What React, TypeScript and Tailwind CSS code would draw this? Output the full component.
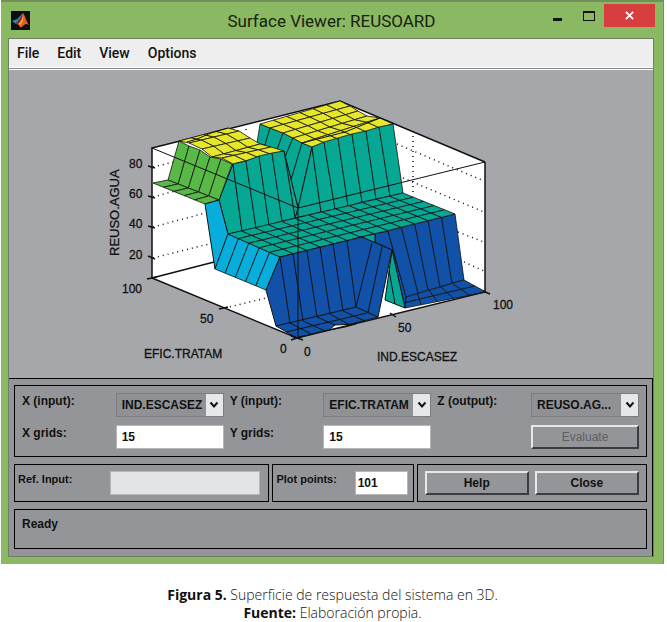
import type { ReactNode } from 'react';

type Point = [number, number];

const YELLOW = '#e6e62a';
const TEAL = '#06a893';
const GREEN = '#58b947';
const CYAN = '#08aedb';
const BLUE = '#1152a8';

const toPoints = (points: Point[]) => points.map((p) => p.join(',')).join(' ');

const mix = (a: Point, b: Point, t: number): Point => [
  a[0] + (b[0] - a[0]) * t,
  a[1] + (b[1] - a[1]) * t,
];

const split = (a: Point, b: Point, n: number): Point[] =>
  Array.from({ length: n + 1 }, (_, i) => mix(a, b, i / n));

// A strip of mesh cells stretched between two edges with the same number of points
function Patch({ from, to, steps = 1, fill }: { from: Point[]; to: Point[]; steps?: number; fill: string }) {
  const cells: Point[][] = [];
  for (let i = 0; i < from.length - 1; i++) {
    for (let j = 0; j < steps; j++) {
      cells.push([
        mix(from[i], to[i], j / steps),
        mix(from[i + 1], to[i + 1], j / steps),
        mix(from[i + 1], to[i + 1], (j + 1) / steps),
        mix(from[i], to[i], (j + 1) / steps),
      ]);
    }
  }
  return (
    <g fill={fill} stroke="#111" strokeWidth="0.8">
      {cells.map((cell, i) => (
        <polygon key={i} points={toPoints(cell)} />
      ))}
    </g>
  );
}

const leftTops: Point[] = [[233, 164], [246, 161], [259, 156], [272, 153], [284, 151]];
const rightTops: Point[] = [[312, 147], [324, 142], [338, 138], [352, 134], [366, 131], [379, 127], [393, 124]];

const dotted: [Point, Point][] = [
  [[153, 167], [178, 161]],
  [[153, 197], [205, 183]],
  [[153, 227], [209, 212]],
  [[153, 258], [213, 243]],
  [[225, 308], [270, 297]],
  [[397, 144], [484, 181]],
  [[403, 178], [484, 212]],
  [[458, 232], [484, 242]],
  [[464, 262], [484, 271]],
  [[413, 131], [413, 195]],
  [[246, 124], [246, 134]],
];

const ticks: [Point, Point][] = [
  [[148, 166], [155, 168]],
  [[148, 196], [155, 198]],
  [[148, 226], [155, 228]],
  [[148, 256], [155, 259]],
  [[147, 279], [157, 277]],
  [[219, 309], [228, 307]],
  [[291, 340], [303, 336]],
  [[291, 336], [303, 340]],
  [[390, 313], [396, 317]],
  [[483, 291], [490, 294]],
];

const tickLabels: [number, number, string][] = [
  [129, 168, '80'],
  [129, 198, '60'],
  [129, 228, '40'],
  [129, 259, '20'],
  [122, 293, '100'],
  [200, 323, '50'],
  [280, 353, '0'],
  [304, 356, '0'],
  [398, 332, '50'],
  [493, 309, '100'],
];

function SurfacePlot() {
  return (
    <svg viewBox="9 70 644 308" className="block w-full" role="img" aria-label="REUSO.AGUA">
      <polygon points="152,148 340,101 485,162 485,292 297,338 152,278" fill="#fff" />
      <g stroke="#111" strokeWidth="1.5" strokeDasharray="1 4">
        {dotted.map(([a, b], i) => (
          <line key={i} x1={a[0]} y1={a[1]} x2={b[0]} y2={b[1]} />
        ))}
      </g>
      <path d="M152 278L218 261M152 148L340 101L485 162" fill="none" stroke="#111" strokeWidth="1.5" />

      {/* back right block */}
      <Patch
        from={[[260, 124], [270, 128], [283, 133], [293, 138], [302, 143], [312, 147]]}
        to={[[257, 143], [265, 145], [276, 153], [285, 157], [291, 180], [298, 208]]}
        fill={TEAL}
      />
      <Patch
        from={[[260, 124], [270, 128], [283, 133], [293, 138], [302, 143], [312, 147]]}
        to={[[340, 101], [350, 106], [358, 111], [367, 116], [380, 118], [393, 124]]}
        steps={6}
        fill={YELLOW}
      />
      <path d="M302 143L345 132L380 118L393 123" fill="none" stroke="#111" />
      <polygon points="312,147 298,208 295,218 321,212" fill={TEAL} stroke="#111" />
      <Patch
        from={rightTops}
        to={[[321, 212], [335, 209], [348, 206], [362, 202], [376, 199], [390, 196], [403, 193]]}
        fill={TEAL}
      />

      {/* back left block */}
      <Patch
        from={[[179, 141], [189, 143], [202, 149], [212, 157], [222, 158], [233, 164]]}
        to={[[228, 128], [239, 131], [250, 138], [260, 144], [271, 147], [284, 151]]}
        steps={4}
        fill={YELLOW}
      />
      <path d="M187 142L197 139L211 133L228 128" fill="none" stroke="#111" />
      <polygon points="284,151 298,208 295,218" fill={TEAL} stroke="#111" />
      <polygon points="233,164 219,200 228,234 242,231" fill={TEAL} stroke="#111" />
      <Patch
        from={leftTops}
        to={[[242, 231], [256, 228], [269, 225], [282, 221], [295, 218]]}
        fill={TEAL}
      />
      <Patch
        from={[[179, 141], [189, 146], [200, 150], [210, 157], [221, 159], [232, 164]]}
        to={split([168, 180], [219, 200], 5)}
        fill={GREEN}
      />
      <Patch from={split([153, 183], [205, 204], 5)} to={split([168, 180], [219, 200], 5)} fill={GREEN} />
      <polygon points="205,204 219,200 228,234 215,269" fill={CYAN} stroke="#111" />
      <Patch from={split([228, 234], [280, 257], 5)} to={split([215, 269], [266, 290], 5)} fill={CYAN} />

      {/* lower right slope */}
      <polygon points="375,234 388,231 406,297 405,308 392,250 375,242" fill={BLUE} stroke="#111" />
      <Patch
        from={split([388, 231], [455, 214], 5)}
        to={[[406, 297], [418, 293], [428, 290], [440, 287], [452, 283], [464, 280]]}
        fill={BLUE}
      />
      <Patch from={split([406, 297], [464, 280], 5)} to={split([405, 308], [486, 292], 5)} steps={2} fill={BLUE} />
      <polygon points="392,250 405,308 385,300" fill={TEAL} stroke="#111" />
      <path d="M389 270L395 304" stroke="#111" />

      {/* plateau */}
      <Patch from={split([228, 234], [403, 193], 13)} to={split([280, 257], [455, 214], 13)} steps={5} fill={TEAL} />
      <polygon points="360,237 375,234 375,243" fill={TEAL} stroke="#111" />

      {/* lower left slope */}
      <polygon
        points="280,257 266,290 276,326 297,338 378,317 392,250 362,237"
        fill={BLUE}
        stroke="#111"
      />
      <path d="M329 330L335 325L356 324L345 327Z" fill="#fff" stroke="#111" />
      <path
        d="M280 257L290 323M293 254L303 321M307 251L317 317M320 247L330 314M333 244L343 311M347 241L356 307M372 243L356 307M382 247L368 313M276 326L356 307L378 317M286 332L329 322L367 313M290 323L311 334M303 321L325 331M317 317L335 325M330 314L350 325M343 311L365 321"
        fill="none"
        stroke="#111"
      />

      {/* axes box */}
      <path d="M152 148L298 208L485 162M298 208V338" fill="none" stroke="#111" strokeWidth="1" />
      <path d="M152 147V278L297 338L485 292V162" fill="none" stroke="#111" strokeWidth="1.5" />
      {ticks.map(([a, b], i) => (
        <line key={i} x1={a[0]} y1={a[1]} x2={b[0]} y2={b[1]} stroke="#111" strokeWidth="1.5" />
      ))}

      <g className="font-['Liberation_Sans',sans-serif] text-[12px]" fill="#111" stroke="#111" strokeWidth="0.3">
        {tickLabels.map(([x, y, label], i) => (
          <text key={i} x={x} y={y}>{label}</text>
        ))}
        <text x="144" y="358">EFIC.TRATAM</text>
        <text x="377" y="361">IND.ESCASEZ</text>
        <text transform="translate(119 256) rotate(-90)" className="text-[13px]">REUSO.AGUA</text>
      </g>
    </svg>
  );
}

function MatlabIcon() {
  return (
    <svg viewBox="0 0 19 19" className="size-[19px]" aria-hidden="true">
      <rect width="19" height="19" fill="#0b0f14" />
      <path d="M1 10L6 8L8 10L5 13Z" fill="#2b8ca8" />
      <path d="M6 8L10 4L12 2L9 10L7 12L5 12Z" fill="#2f7f96" />
      <path d="M12 2C14 4 15 10 18 14C15 12 14 13 12 15C11 16 10 17 9 16C8 14 7 13 5 13C9 11 10 5 12 2Z" fill="#e4582a" />
      <path d="M12 4C13 7 12 12 9 15C9 13 8 13 7 13C10 11 11 8 12 4Z" fill="#f59a4a" />
      <path d="M12 3C11 8 9 11 7 13L5 12C8 10 10 6 12 3Z" fill="#7a2418" />
    </svg>
  );
}

function SelectField({ id, label, value }: { id: string; label: string; value: string }) {
  return (
    <div className="flex justify-between">
      <label htmlFor={id}>{label}</label>
      <div className="relative h-6 w-27">
        <select id={id} className="h-full w-full appearance-none border border-[#7b7d80] bg-[#8f9194] pr-5 pl-[5px]">
          <option>{value}</option>
        </select>
        <span className="pointer-events-none absolute inset-y-px right-px flex w-[17px] items-center justify-center bg-[#e6e7e9]">
          <svg viewBox="0 0 10 8" className="h-2 w-2.5" fill="none" stroke="#111" strokeWidth="2">
            <path d="M1.500 1.500L5 5.500L8.500 1.500" />
          </svg>
        </span>
      </div>
    </div>
  );
}

function TextField({ id, label, value }: { id: string; label: string; value: string }) {
  return (
    <div className="flex justify-between">
      <label htmlFor={id}>{label}</label>
      <input id={id} defaultValue={value} className="h-6 w-27 border border-[#b5b6b9] bg-white px-[5px]" />
    </div>
  );
}

function PushButton({ children, disabled = false }: { children: ReactNode; disabled?: boolean }) {
  return (
    <button
      disabled={disabled}
      className="h-6 w-full border-2 border-t-[#e8e8ea] border-r-[#3a3c42] border-b-[#3a3c42] border-l-[#e8e8ea] disabled:font-normal disabled:text-[#5d5f63]"
    >
      {children}
    </button>
  );
}

export default function App() {
  return (
    <main className="bg-white pr-[3px] pl-px text-[#111]">
      <section className="border-t-2 border-r border-[#71905a] bg-[#8ab863] pb-[7px]">
        <header className="flex h-9 items-start pr-2 pl-2.5">
          <div className="w-28 pt-[9px]">
            <MatlabIcon />
          </div>
          <h1 className="flex-1 pt-[5px] text-center font-[Roboto,sans-serif] text-[17px] leading-7 text-[#18220e]">
            Surface Viewer: REUSOARD
          </h1>
          <div className="flex items-start pt-0.5">
            <button aria-label="Minimize" className="flex h-5 w-[34px] items-end justify-center pb-[3px]">
              <span className="h-[3px] w-[9px] bg-[#111]" />
            </button>
            <button aria-label="Maximize" className="flex h-5 w-[30px] items-end justify-center pb-[3px]">
              <span className="h-[10px] w-3 border border-t-2 border-[#111]" />
            </button>
            <button aria-label="Close" className="flex h-[23px] w-[51px] items-center justify-center bg-[#d63e40]">
              <svg viewBox="0 0 10 10" className="size-[9px]" stroke="#fff" strokeWidth="2">
                <path d="M1 1L9 9M9 1L1 9" />
              </svg>
            </button>
          </div>
        </header>

        <div className="mr-[9px] ml-[7px] border border-[#6f7f63]">
          <nav className="flex h-[29px] items-center gap-[18px] border-b border-white bg-[#eeeeee] px-2 font-[Roboto,sans-serif] text-[14px] font-medium">
            <button>File</button>
            <button>Edit</button>
            <button>View</button>
            <button>Options</button>
          </nav>

          <div className="border-t border-[#85878a] bg-[#a6a7ab] pt-px shadow-[inset_0_1px_0_#fff]">
            <SurfacePlot />
          </div>

          <form
            onSubmit={(e) => e.preventDefault()}
            className="flex flex-col gap-[7px] border-t border-r border-black bg-[#939598] px-[5px] pt-1.5 pb-[7px] font-['Liberation_Sans',sans-serif] text-[12px] leading-4 font-bold"
          >
            <div className="grid grid-cols-3 gap-x-1.5 gap-y-2 border border-black p-[7px]">
              <SelectField id="x-input" label="X (input):" value="IND.ESCASEZ" />
              <SelectField id="y-input" label="Y (input):" value="EFIC.TRATAM" />
              <SelectField id="z-output" label="Z (output):" value="REUSO.AG..." />
              <TextField id="x-grids" label="X grids:" value="15" />
              <TextField id="y-grids" label="Y grids:" value="15" />
              <div className="ml-auto w-27">
                <PushButton disabled>Evaluate</PushButton>
              </div>
            </div>

            <div className="grid grid-cols-[255fr_141fr_230fr] gap-[3px]">
              <div className="flex justify-between border border-black py-1.5 pr-2 pl-[3px] text-[11px]">
                <label htmlFor="ref-input">Ref. Input:</label>
                <input id="ref-input" className="h-6 w-[150px] border border-[#b5b6b9] bg-[#e3e4e6] px-1" />
              </div>
              <div className="flex justify-between border border-black py-1.5 pr-[5px] pl-[3px] text-[11px]">
                <label htmlFor="plot-points">Plot points:</label>
                <input
                  id="plot-points"
                  defaultValue="101"
                  className="h-6 w-[53px] border border-[#b5b6b9] bg-white px-0.5 text-[12px]"
                />
              </div>
              <div className="flex gap-1.5 border border-black px-[7px] py-1.5">
                <PushButton>Help</PushButton>
                <PushButton>Close</PushButton>
              </div>
            </div>

            <output className="h-10 border border-black px-[7px] py-1.5">Ready</output>
          </form>
        </div>
      </section>

      <p className="pt-[22px] text-center font-['Open_Sans',sans-serif] text-[14px] leading-[18px] font-light">
        <strong className="font-bold">Figura 5.</strong> Superficie de respuesta del sistema en 3D.
        <br />
        <strong className="font-bold">Fuente:</strong> Elaboración propia.
      </p>
    </main>
  );
}
